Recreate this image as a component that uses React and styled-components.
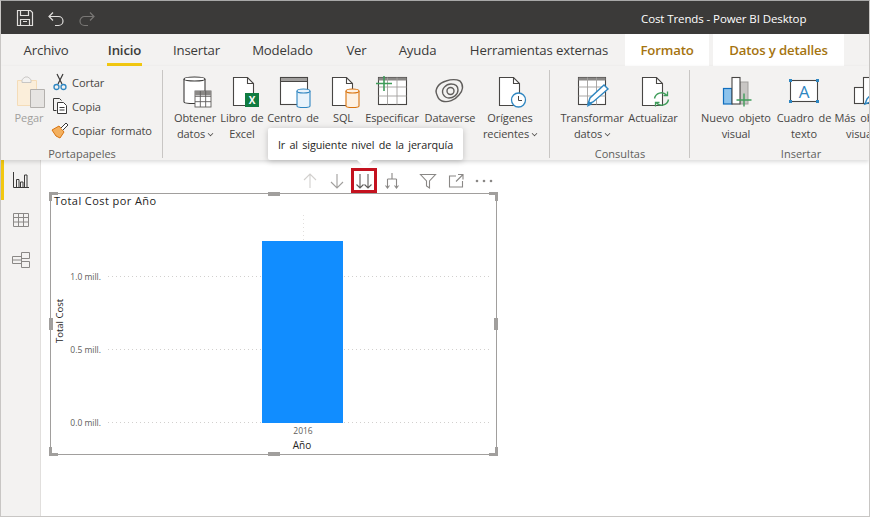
import React from "react";
import styled, { createGlobalStyle } from "styled-components";

const Global = createGlobalStyle`
  html, body { margin: 0; padding: 0; background: #fff; }
  body { font-family: "Open Sans", "Noto Sans", "Liberation Sans", sans-serif; }
  * { box-sizing: border-box; }
`;

const Window = styled.div`
  position: relative;
  width: 870px;
  height: 517px;
  overflow: hidden;
  display: flex;
  flex-direction: column;
  background: #fff;
  border-top: 1px solid #a8a8a8;
  border-right: 1px solid #c8c6c4;
  border-bottom: 1px solid #c8c6c4;
  border-left: 1px solid #c8c6c4;
`;

const TitleBar = styled.header`
  height: 33px;
  flex: none;
  display: flex;
  align-items: center;
  background: #3b3a39;
  padding-left: 15px;
  gap: 13px;
`;

const QuickIcon = styled.svg`
  width: 18px;
  height: 18px;
  display: block;
  fill: none;
  stroke: ${(p) => p.$color || "#e1dfdd"};
  stroke-width: 1.2;
`;

const WindowTitle = styled.div`
  margin-left: auto;
  width: 228px;
  color: #fff;
  font-size: 11.5px;
  white-space: nowrap;
  padding-top: 2px;
  letter-spacing: -0.1px;
`;

const TabBar = styled.nav`
  height: 32px;
  flex: none;
  display: flex;
  background: #f3f2f1;
`;

const Tab = styled.div`
  width: ${(p) => p.$w}px;
  margin-left: ${(p) => p.$ml || 0}px;
  display: flex;
  align-items: center;
  justify-content: center;
  position: relative;
  font-size: 13.2px;
  letter-spacing: -0.15px;
  white-space: nowrap;
  color: ${(p) => (p.$context ? "#a5740f" : "#3b3a39")};
  font-weight: ${(p) => (p.$active || p.$context ? 600 : 400)};
  background: ${(p) => (p.$context ? "#fff" : "transparent")};
  ${(p) =>
    p.$active &&
    `&::after{content:"";position:absolute;left:0;right:0;bottom:0;height:3px;background:#f2c811;}`}
`;

const Ribbon = styled.div`
  height: 94px;
  flex: none;
  display: flex;
  background: #f3f2f1;
  box-shadow: 0 2px 4px rgba(0, 0, 0, 0.14);
  position: relative;
  z-index: 1;
`;

const Group = styled.section`
  width: ${(p) => p.$w}px;
  flex: none;
  position: relative;
  display: flex;
  flex-direction: column;
  padding-left: ${(p) => p.$pl || 0}px;
  &::after {
    content: ${(p) => (p.$sep ? '""' : "none")};
    position: absolute;
    right: 0;
    top: 4px;
    bottom: 2px;
    width: 1px;
    background: #c8c6c4;
  }
`;

const GroupBody = styled.div`
  height: 82px;
  display: flex;
  padding-top: 10px;
`;

const GroupLabel = styled.div`
  margin-left: ${(p) => -(p.$pl || 0)}px;
  text-align: center;
  font-size: 11px;
  line-height: 12px;
  color: #605e5c;
  white-space: nowrap;
`;

const LargeButton = styled.div`
  width: ${(p) => p.$w}px;
  flex: none;
  display: flex;
  flex-direction: column;
  align-items: center;
  color: ${(p) => (p.$disabled ? "#a19f9d" : "#484644")};
  font-size: 11px;
  line-height: 16px;
  white-space: nowrap;
  text-align: center;
  letter-spacing: -0.1px;
  word-spacing: 2px;
`;

const LargeIcon = styled.svg`
  width: 36px;
  height: 32px;
  margin-bottom: 2px;
  display: block;
  flex: none;
  overflow: visible;
`;

const Chevron = styled.span`
  display: inline-block;
  width: 5px;
  height: 5px;
  margin-left: 3px;
  border-right: 1px solid #484644;
  border-bottom: 1px solid #484644;
  transform: translateY(-2px) rotate(45deg) scale(0.8);
`;

const SmallStack = styled.div`
  display: flex;
  flex-direction: column;
  gap: 4px;
  margin-top: -4px;
  margin-left: 3px;
`;

const SmallButton = styled.div`
  height: 20px;
  display: flex;
  align-items: center;
  gap: 3px;
  font-size: 11.1px;
  color: #484644;
  white-space: nowrap;
  letter-spacing: -0.1px;
  word-spacing: 2.5px;
`;

const SmallIcon = styled.svg`
  width: 18px;
  height: 18px;
  display: block;
  flex: none;
`;

const Workspace = styled.div`
  flex: 1;
  display: flex;
  min-height: 0;
`;

const Rail = styled.aside`
  width: 40px;
  flex: none;
  background: #f3f2f1;
  border-right: 1px solid #e1dfdd;
  display: flex;
  flex-direction: column;
`;

const RailItem = styled.div`
  height: 40px;
  display: flex;
  align-items: center;
  justify-content: center;
  border-left: 3px solid ${(p) => (p.$active ? "#f2c811" : "transparent")};
  padding-right: 3px;
`;

const RailIcon = styled.svg`
  width: 18px;
  height: 18px;
  fill: none;
  stroke: ${(p) => p.$color || "#8a8886"};
  stroke-width: 1;
`;

const Canvas = styled.main`
  flex: 1;
  padding: 8px 0 0 9px;
  display: flex;
  flex-direction: column;
`;

const VisualToolbar = styled.div`
  width: 448px;
  height: 25px;
  display: flex;
  align-items: center;
  padding-left: 246px;
`;

const ToolButton = styled.div`
  width: ${(p) => p.$w || 28}px;
  height: 25px;
  flex: none;
  display: flex;
  align-items: center;
  justify-content: center;
  outline: ${(p) => (p.$selected ? "3px solid #c4121f" : "none")};
  outline-offset: -3px;
`;

const ToolIcon = styled.svg`
  width: 20px;
  height: 20px;
  flex: none;
  fill: none;
  stroke: ${(p) => p.$color || "#8a8886"};
  stroke-width: 1.1;
`;

const DotsIcon = styled(ToolIcon)`
  fill: #8a8886;
  stroke: none;
`;

const Visual = styled.section`
  position: relative;
  width: 447px;
  height: 262px;
  border: 1px solid #a19f9d;
  display: flex;
  flex-direction: column;
`;

const VisualTitle = styled.h2`
  margin: 0;
  padding: 0 0 0 3px;
  height: 13px;
  font-size: 11px;
  line-height: 13px;
  font-weight: 400;
  color: #252423;
  letter-spacing: 0.42px;
  white-space: nowrap;
`;

const ChartSvg = styled.svg`
  display: block;
  width: 445px;
  height: 247px;
  text {
    font-family: "Open Sans", "Noto Sans", sans-serif;
  }
`;

const Handle = styled.span`
  position: absolute;
  background: #a19f9d;
  ${(p) => p.$css}
`;

const Corner = styled.span`
  position: absolute;
  width: 9px;
  height: 9px;
  ${(p) => p.$css}
`;

const Tooltip = styled.div`
  position: absolute;
  left: 267px;
  top: 127px;
  width: 195px;
  height: 32px;
  background: #fff;
  border-radius: 2px;
  box-shadow: 0 1px 6px rgba(0, 0, 0, 0.22);
  display: flex;
  align-items: center;
  justify-content: center;
  font-size: 10.8px;
  color: #252423;
  white-space: nowrap;
  letter-spacing: -0.08px;
  word-spacing: 1.5px;
  z-index: 5;
  &::after {
    content: "";
    position: absolute;
    left: 89px;
    top: 32px;
    border-left: 8px solid transparent;
    border-right: 8px solid transparent;
    border-top: 8px solid #fff;
  }
`;

const Doc = () => (
  <g>
    <path d="M7.5 1.5h14l6 6v22h-20z" fill="#fff" stroke="#484644" strokeWidth="1.1" />
    <path d="M21.5 1.5v6h6" fill="none" stroke="#484644" strokeWidth="1.1" />
  </g>
);

const Cylinder = ({ x, y, w, h, color, fill = "#fff" }) => (
  <g fill={fill} stroke={color} strokeWidth="1.1">
    <path d={`M${x} ${y + 2}v${h - 3}c0 2 ${w} 2 ${w} 0v-${h - 3}`} />
    <ellipse cx={x + w / 2} cy={y + 2} rx={w / 2} ry="2" />
  </g>
);

const MiniGrid = ({ x, y, w, h }) => {
  const cw = w / 3;
  const ch = h / 3;
  return (
    <g stroke="#605e5c" strokeWidth="0.9" fill="#fff">
      <rect x={x} y={y} width={w} height={h} />
      <rect x={x} y={y} width={w} height={ch - 1} fill="#8a8886" stroke="none" />
      <path d={`M${x} ${y + ch * 2}h${w}M${x} ${y + ch}h${w}M${x + cw} ${y}v${h}M${x + cw * 2} ${y}v${h}`} />
    </g>
  );
};

const Icons = {
  paste: (
    <g>
      <path d="M6.500 4.500h19v25h-19z" fill="#fbeeda" stroke="#f4dcb8" />
      <path d="M11 4.500c0-2 2-2 3-3.500h3c1 1.500 3 1.500 3 3.500v2h-9z" fill="#f3f2f1" stroke="#c8c6c4" />
      <path d="M19.500 13.500h14v18h-14z" fill="#e6e4e2" stroke="#b3b0ad" />
    </g>
  ),
  getData: (
    <g>
      <Cylinder x={7} y={1} w={21} h={26} color="#3b3a39" />
      <MiniGrid x={18} y={15} w={16} h={16} />
    </g>
  ),
  excel: (
    <g>
      <g transform="translate(2 0)"><Doc /></g>
      <rect x="21" y="17" width="14" height="14" fill="#107c41" />
      <text x="28" y="28" textAnchor="middle" fontSize="10" fontWeight="700" fill="#fff" fontFamily="Open Sans">X</text>
    </g>
  ),
  hub: (
    <g>
      <rect x="5.500" y="1.500" width="27" height="27" fill="#fff" stroke="#484644" strokeWidth="1.1" />
      <rect x="5.500" y="1.500" width="27" height="4" fill="#a19f9d" stroke="#484644" strokeWidth="1" />
      <Cylinder x={22} y={13} w={13} h={18} color="#2e86c1" fill="#e8f3fb" />
    </g>
  ),
  sql: (
    <g>
      <Doc />
      <Cylinder x={21} y={13} w={13} h={18} color="#d9730d" fill="#fdf1e3" />
    </g>
  ),
  enter: (
    <g>
      <rect x="4.500" y="1.500" width="28" height="27" fill="#fff" stroke="#484644" strokeWidth="1.100" />
      <rect x="4.500" y="1.500" width="28" height="3" fill="#8a8886" />
      <path d="M4.500 11h28M4.500 20h28M13.500 1.500v27M23 1.500v27" stroke="#a19f9d" strokeWidth="0.9" />
      <path d="M2 7.500h16M10 0v15" stroke="#3f9c5a" strokeWidth="1.600" />
    </g>
  ),
  dataverse: (
    <g fill="none" stroke="#605e5c" strokeWidth="1.400">
      <path d="M5 19c-3-6 2-12 9-14 6-2 10-2 14 0 4 4 3 10-1 14-4 5-11 8-17 6-3-1-4-3-5-6z" />
      <path d="M11 18c-2-5 3-10 8-10 4 0 7 2 7 6 0 5-5 8-9 8-3 0-5-2-6-4z" />
      <circle cx="18.500" cy="15" r="3.500" />
    </g>
  ),
  recent: (
    <g>
      <Doc />
      <circle cx="26.500" cy="24" r="7" fill="#fff" stroke="#2e86c1" strokeWidth="1.300" />
      <path d="M26.500 20v4.500h3.500" fill="none" stroke="#484644" strokeWidth="1" />
    </g>
  ),
  transform: (
    <g>
      <rect x="4.500" y="1.500" width="27" height="27" fill="#fff" stroke="#484644" strokeWidth="1.100" />
      <rect x="4.500" y="1.500" width="27" height="3" fill="#8a8886" />
      <path d="M4.500 11h27M4.500 20h27M13.500 1.500v27M22.500 1.500v27" stroke="#a19f9d" strokeWidth="0.9" />
      <path d="M14 28l2-6 14-13 4 4-15 13z" fill="#fff" stroke="#2e86c1" strokeWidth="1.400" />
      <path d="M13 31l1.500-6 4 3z" fill="#2e86c1" />
    </g>
  ),
  refresh: (
    <g>
      <Doc />
      <g transform="translate(1.500 -1.500)">
        <path d="M18 24a7 7 0 0 1 12-3.500M32 25a7 7 0 0 1-12 3.500" fill="none" stroke="#3f9c5a" strokeWidth="1.400" />
        <path d="M31 17v4h-4M19 32v-4h4" fill="none" stroke="#3f9c5a" strokeWidth="1.300" />
      </g>
    </g>
  ),
  newVisual: (
    <g>
      <rect x="22" y="6" width="8" height="22" fill="#c8c6c4" stroke="#a19f9d" />
      <rect x="5.500" y="12.500" width="8.500" height="15.500" fill="#8cc3ec" stroke="#106ebe" strokeWidth="1.200" />
      <rect x="14" y="1.500" width="8" height="26.500" fill="#fff" stroke="#484644" strokeWidth="1.100" />
      <path d="M18.500 24h15M26 17.500v13" stroke="#3f9c5a" strokeWidth="1.400" />
    </g>
  ),
  textBox: (
    <g>
      <rect x="4.500" y="4.500" width="27" height="21" fill="#fff" stroke="#484644" strokeWidth="1.100" />
      <g fill="#2e86c1">
        <rect x="3" y="3" width="3" height="3" />
        <rect x="30" y="3" width="3" height="3" />
        <rect x="3" y="24" width="3" height="3" />
        <rect x="30" y="24" width="3" height="3" />
      </g>
      <text x="18" y="22" textAnchor="middle" fontSize="17" fill="#2e86c1" fontFamily="Open Sans">A</text>
    </g>
  ),
  more: (
    <g transform="translate(3 -2)">
      <rect x="3.500" y="13.500" width="9" height="16" fill="#fff" stroke="#484644" strokeWidth="1.100" />
      <rect x="12.500" y="3.500" width="9" height="26" fill="#fff" stroke="#484644" strokeWidth="1.100" />
      <path d="M14 30l2-5 12-13 3 3-12 13z" fill="#fff" stroke="#2e86c1" strokeWidth="1.400" />
    </g>
  ),
};

const Large = ({ icon, w, lines, chevron, disabled }) => (
  <LargeButton $w={w} $disabled={disabled}>
    <LargeIcon viewBox="0 0 36 32">{Icons[icon]}</LargeIcon>
    <div>{lines[0]}</div>
    {lines[1] && (
      <div>
        {lines[1]}
        {chevron && <Chevron />}
      </div>
    )}
  </LargeButton>
);

const Chart = () => {
  const grid = [
    [276, "1.0 mill."],
    [349, "0.5 mill."],
    [422, "0.0 mill."],
  ];
  return (
    <ChartSvg viewBox="51 207 445 247">
      {grid.map(([y, label]) => (
        <g key={y}>
          <line x1="108" x2="490" y1={y + 0.5} y2={y + 0.5} stroke="#d2d0ce" strokeWidth="1" strokeDasharray="1 3" />
          <text x="101" y={y + 4} textAnchor="end" fontSize="8.500" fill="#605e5c">{label}</text>
        </g>
      ))}
      <line x1="303.500" x2="303.500" y1="215" y2="241" stroke="#e1dfdd" strokeDasharray="1 3" />
      <rect x="262" y="241" width="81" height="182" fill="#118dff" />
      <text x="303" y="434" textAnchor="middle" fontSize="8.500" fill="#605e5c">2016</text>
      <text x="302" y="449" textAnchor="middle" fontSize="10" fill="#252423">Año</text>
      <text transform="translate(63 321) rotate(-90)" textAnchor="middle" fontSize="9.500" fill="#252423">Total Cost</text>
    </ChartSvg>
  );
};

const cornerPaths = {
  tl: "M0 0h9v3H3v6H0z",
  tr: "M0 0h9v9H6V3H0z",
  bl: "M0 0h3v6h6v3H0z",
  br: "M6 0h3v9H0V6h6z",
};

const CornerMark = ({ k, css }) => (
  <Corner $css={css}>
    <svg width="9" height="9" viewBox="0 0 9 9" style={{ display: "block" }}>
      <path d={cornerPaths[k]} fill="#a19f9d" />
    </svg>
  </Corner>
);

export default function App() {
  return (
    <>
      <Global />
      <Window>
        <TitleBar>
          <QuickIcon viewBox="0 0 18 18">
            <path d="M1.500 1.500h13l2 2v13h-15z" />
            <path d="M4.500 1.500v5h8v-5M4.500 16.500v-6h9v6M7 12.500h4" />
          </QuickIcon>
          <QuickIcon viewBox="0 0 18 18">
            <path d="M2.500 7.500h9a4.500 4.500 0 0 1 0 9H8" />
            <path d="M6 3.500l-4 4 4 4" />
          </QuickIcon>
          <QuickIcon viewBox="0 0 18 18" $color="#797775">
            <path d="M15.500 7.500h-9a4.500 4.500 0 0 0 0 9H10" />
            <path d="M12 3.500l4 4-4 4" />
          </QuickIcon>
          <WindowTitle>Cost Trends - Power BI Desktop</WindowTitle>
        </TitleBar>

        <TabBar>
          <Tab $w={46} $ml={22}>Archivo</Tab>
          <Tab $w={35} $ml={38} $active>Inicio</Tab>
          <Tab $w={47} $ml={31}>Insertar</Tab>
          <Tab $w={63} $ml={31}>Modelado</Tab>
          <Tab $w={21} $ml={32}>Ver</Tab>
          <Tab $w={39} $ml={31}>Ayuda</Tab>
          <Tab $w={138} $ml={33}>Herramientas externas</Tab>
          <Tab $w={84} $ml={17} $context>Formato</Tab>
          <Tab $w={131} $ml={4} $context>Datos y detalles</Tab>
        </TabBar>

        <Ribbon>
          <Group $w={162} $sep $pl={9}>
            <GroupBody>
              <Large icon="paste" w={38} lines={["Pegar"]} disabled />
              <SmallStack>
                <SmallButton>
                  <SmallIcon viewBox="0 0 18 18">
                    <path d="M6 1l5 10M12 1L7 11" stroke="#3b3a39" strokeWidth="1.200" fill="none" />
                    <circle cx="5.500" cy="14" r="2.500" fill="none" stroke="#2e86c1" strokeWidth="1.300" />
                    <circle cx="12.500" cy="14" r="2.500" fill="none" stroke="#2e86c1" strokeWidth="1.300" />
                  </SmallIcon>
                  Cortar
                </SmallButton>
                <SmallButton>
                  <SmallIcon viewBox="0 0 18 18">
                    <path d="M2.500 1.500h6l2 2M2.500 1.500v12h3" fill="none" stroke="#3b3a39" />
                    <path d="M6.500 5.500h6l3 3v8h-9z" fill="#fff" stroke="#3b3a39" />
                    <path d="M8.500 10.500h5M8.500 13h5" stroke="#3b3a39" />
                  </SmallIcon>
                  Copia
                </SmallButton>
                <SmallButton>
                  <SmallIcon viewBox="0 0 18 18">
                    <path d="M1 9l7-4 5 6-4 6-4-2z" fill="#f3b05f" stroke="#d9730d" />
                    <path d="M10 7l5-5 2 2-5 5" fill="#fff" stroke="#3b3a39" />
                  </SmallIcon>
                  Copiar formato
                </SmallButton>
              </SmallStack>
            </GroupBody>
            <GroupLabel $pl={9}>Portapapeles</GroupLabel>
          </Group>

          <Group $w={387} $sep $pl={8}>
            <GroupBody>
              <Large icon="getData" w={48} lines={["Obtener", "datos"]} chevron />
              <Large icon="excel" w={46} lines={["Libro de", "Excel"]} />
              <Large icon="hub" w={56} lines={["Centro de"]} />
              <Large icon="sql" w={44} lines={["SQL"]} />
              <Large icon="enter" w={54} lines={["Especificar"]} />
              <Large icon="dataverse" w={62} lines={["Dataverse"]} />
              <Large icon="recent" w={58} lines={["Orígenes", "recientes"]} chevron />
            </GroupBody>
          </Group>

          <Group $w={140} $sep $pl={7}>
            <GroupBody>
              <Large icon="transform" w={70} lines={["Transformar", "datos"]} chevron />
              <Large icon="refresh" w={52} lines={["Actualizar"]} />
            </GroupBody>
            <GroupLabel $pl={7}>Consultas</GroupLabel>
          </Group>

          <Group $w={222} $pl={8}>
            <GroupBody>
              <Large icon="newVisual" w={76} lines={["Nuevo objeto", "visual"]} />
              <Large icon="textBox" w={60} lines={["Cuadro de", "texto"]} />
              <Large icon="more" w={64} lines={["Más objetos", "visuales"]} />
            </GroupBody>
            <GroupLabel $pl={8}>Insertar</GroupLabel>
          </Group>
        </Ribbon>

        <Workspace>
          <Rail>
            <RailItem $active>
              <RailIcon viewBox="0 0 18 18" $color="#3b3a39">
                <path d="M1.500 1v15.500H17M4.500 8.500h2.500v8H4.500zM8.500 11h2.500v5.500H8.500zM12.500 4h2.500v12.500h-2.500z" />
              </RailIcon>
            </RailItem>
            <RailItem>
              <RailIcon viewBox="0 0 18 18">
                <path d="M1.500 2.500h15v13h-15zM1.500 6.500h15M1.500 11h15M6.500 2.500v13M11.500 2.500v13" />
              </RailIcon>
            </RailItem>
            <RailItem>
              <RailIcon viewBox="0 0 18 18">
                <path d="M9.500 1.500h8v6h-8zM9.500 10.500h8v6h-8zM0.500 5.500h9v7h-9zM0.500 9h9" />
              </RailIcon>
            </RailItem>
          </Rail>

          <Canvas>
            <VisualToolbar>
              <ToolButton $w={27}>
                <ToolIcon viewBox="0 0 20 20" $color="#d2d0ce"><path d="M10 17V3M4 9l6-6 6 6" /></ToolIcon>
              </ToolButton>
              <ToolButton>
                <ToolIcon viewBox="0 0 20 20" $color="#a19f9d"><path d="M10 3v14M4 11l6 6 6-6" /></ToolIcon>
              </ToolButton>
              <ToolButton $w={26} $selected>
                <ToolIcon viewBox="0 0 20 20" $color="#605e5c">
                  <path d="M6 3v14M2.500 13.500L6 17l3.500-3.500M14 3v14M10.500 13.500L14 17l3.500-3.500" />
                </ToolIcon>
              </ToolButton>
              <ToolButton $w={30}>
                <ToolIcon viewBox="0 0 20 20" $color="#8a8886">
                  <path d="M10 2v6M5.500 8h9M5.500 8v9M14.500 8v9M3.500 14.500l2 2.500 2-2.500M12.500 14.500l2 2.500 2-2.500" />
                </ToolIcon>
              </ToolButton>
              <ToolButton $w={42}>
                <ToolIcon viewBox="0 0 20 20"><path d="M2.500 3.500h15L11.500 10v7l-3-2v-5z" /></ToolIcon>
              </ToolButton>
              <ToolButton $w={14}>
                <ToolIcon viewBox="0 0 20 20"><path d="M10 5H3.500v11h13v-6M12 3.500h5v5M17 3.500L10 10.500" /></ToolIcon>
              </ToolButton>
              <ToolButton $w={42}>
                <DotsIcon viewBox="0 0 20 20">
                  <circle cx="3" cy="10" r="1.300" />
                  <circle cx="10" cy="10" r="1.300" />
                  <circle cx="17" cy="10" r="1.300" />
                </DotsIcon>
              </ToolButton>
            </VisualToolbar>

            <Visual>
              <VisualTitle>Total Cost por Año</VisualTitle>
              <Chart />
              <CornerMark k="tl" css="left:-2px;top:-2px;" />
              <CornerMark k="tr" css="right:-2px;top:-2px;" />
              <CornerMark k="bl" css="left:-2px;bottom:-2px;" />
              <CornerMark k="br" css="right:-2px;bottom:-2px;" />
              <Handle $css="left:217px;top:-2px;width:12px;height:4px;" />
              <Handle $css="left:217px;bottom:-2px;width:12px;height:4px;" />
              <Handle $css="left:-2px;top:124px;width:4px;height:12px;" />
              <Handle $css="right:-2px;top:124px;width:4px;height:12px;" />
            </Visual>
          </Canvas>
        </Workspace>

        <Tooltip>Ir al siguiente nivel de la jerarquía</Tooltip>
      </Window>
    </>
  );
}
